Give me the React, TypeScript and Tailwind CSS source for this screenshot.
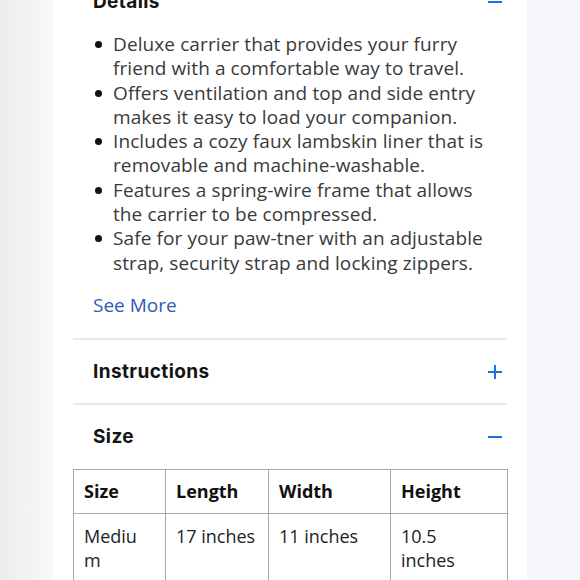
import React from "react";

const bullets = [
  "Deluxe carrier that provides your furry friend with a comfortable way to travel.",
  "Offers ventilation and top and side entry makes it easy to load your companion.",
  "Includes a cozy faux lambskin liner that is removable and machine-washable.",
  "Features a spring-wire frame that allows the carrier to be compressed.",
  "Safe for your paw-tner with an adjustable strap, security strap and locking zippers.",
];

const Plus = () => (
  <svg width="16" height="16" viewBox="0 0 16 16" fill="none">
    <path d="M8 1v14M1 8h14" stroke="#1a73e8" strokeWidth="2" />
  </svg>
);
const Minus = () => (
  <svg width="16" height="16" viewBox="0 0 16 16" fill="none">
    <path d="M1 8h14" stroke="#1a73e8" strokeWidth="2" />
  </svg>
);

export default function App() {
  const head = "font-['Inter',sans-serif] font-bold text-[19px] text-[#141414] tracking-[0.4px]";
  const cell = "border border-[#a9a9a9] pl-[10px] pt-[10px] pb-[20px] align-top";
  return (
    <div className="w-[580px] h-[580px] overflow-hidden flex bg-[#f5f6fa]">
      <div className="w-[53px] shrink-0 bg-gradient-to-r from-[#ececec] to-[#f9f9f9]" />
      <div className="w-[474px] shrink-0 bg-white px-[20px] font-['Open_Sans',sans-serif]">
        {/* Details */}
        <div className="-mt-[27px] h-[58px] flex items-center justify-between pl-[20px] pr-[4px]">
          <span className={head}>Details</span>
          <Minus />
        </div>
        <ul className="mt-[1px] pl-[22px] pr-[12px] text-[19px] leading-[24.3px] text-[#3a3a3a] tracking-[0.1px]">
          {bullets.map((b) => (
            <li key={b} className="flex">
              <span className="w-[18px] shrink-0 flex items-start pt-[9px]">
                <span className="w-[7px] h-[7px] rounded-full bg-[#111]" />
              </span>
              <span>{b}</span>
            </li>
          ))}
        </ul>
        <div className="mt-[18px] pl-[20px] text-[19px] leading-[24px] text-[#2d5bb8] pb-[21px]">See More</div>
        <div className="h-[2px] bg-[#e9e9e9]" />
        {/* Instructions */}
        <div className="h-[63px] pt-[2px] flex items-center justify-between pl-[20px] pr-[4px]">
          <span className={head}>Instructions</span>
          <Plus />
        </div>
        <div className="h-[2px] bg-[#e9e9e9]" />
        {/* Size */}
        <div className="h-[63px] pt-[2px] flex items-center justify-between pl-[20px] pr-[4px]">
          <span className={head}>Size</span>
          <Minus />
        </div>
        <table className="mt-[1px] table-fixed border-collapse w-[434px] text-[18px] leading-[24px] text-[#222]">
          <colgroup>
            <col className="w-[92px]" />
            <col className="w-[103px]" />
            <col className="w-[122px]" />
            <col className="w-[117px]" />
          </colgroup>
          <thead>
            <tr className="h-[44px]">
              {["Size", "Length", "Width", "Height"].map((h) => (
                <th key={h} className="border border-[#a9a9a9] px-[10px] text-left font-bold text-[#111] align-middle">
                  {h}
                </th>
              ))}
            </tr>
          </thead>
          <tbody>
            <tr>
              <td className={cell + " pr-[16px] break-all"}>Medium</td>
              <td className={cell + " pr-[4px] whitespace-nowrap"}>17 inches</td>
              <td className={cell + " pr-[4px] whitespace-nowrap"}>11 inches</td>
              <td className={cell + " pr-[16px]"}>10.5 inches</td>
            </tr>
          </tbody>
        </table>
      </div>
    </div>
  );
}
